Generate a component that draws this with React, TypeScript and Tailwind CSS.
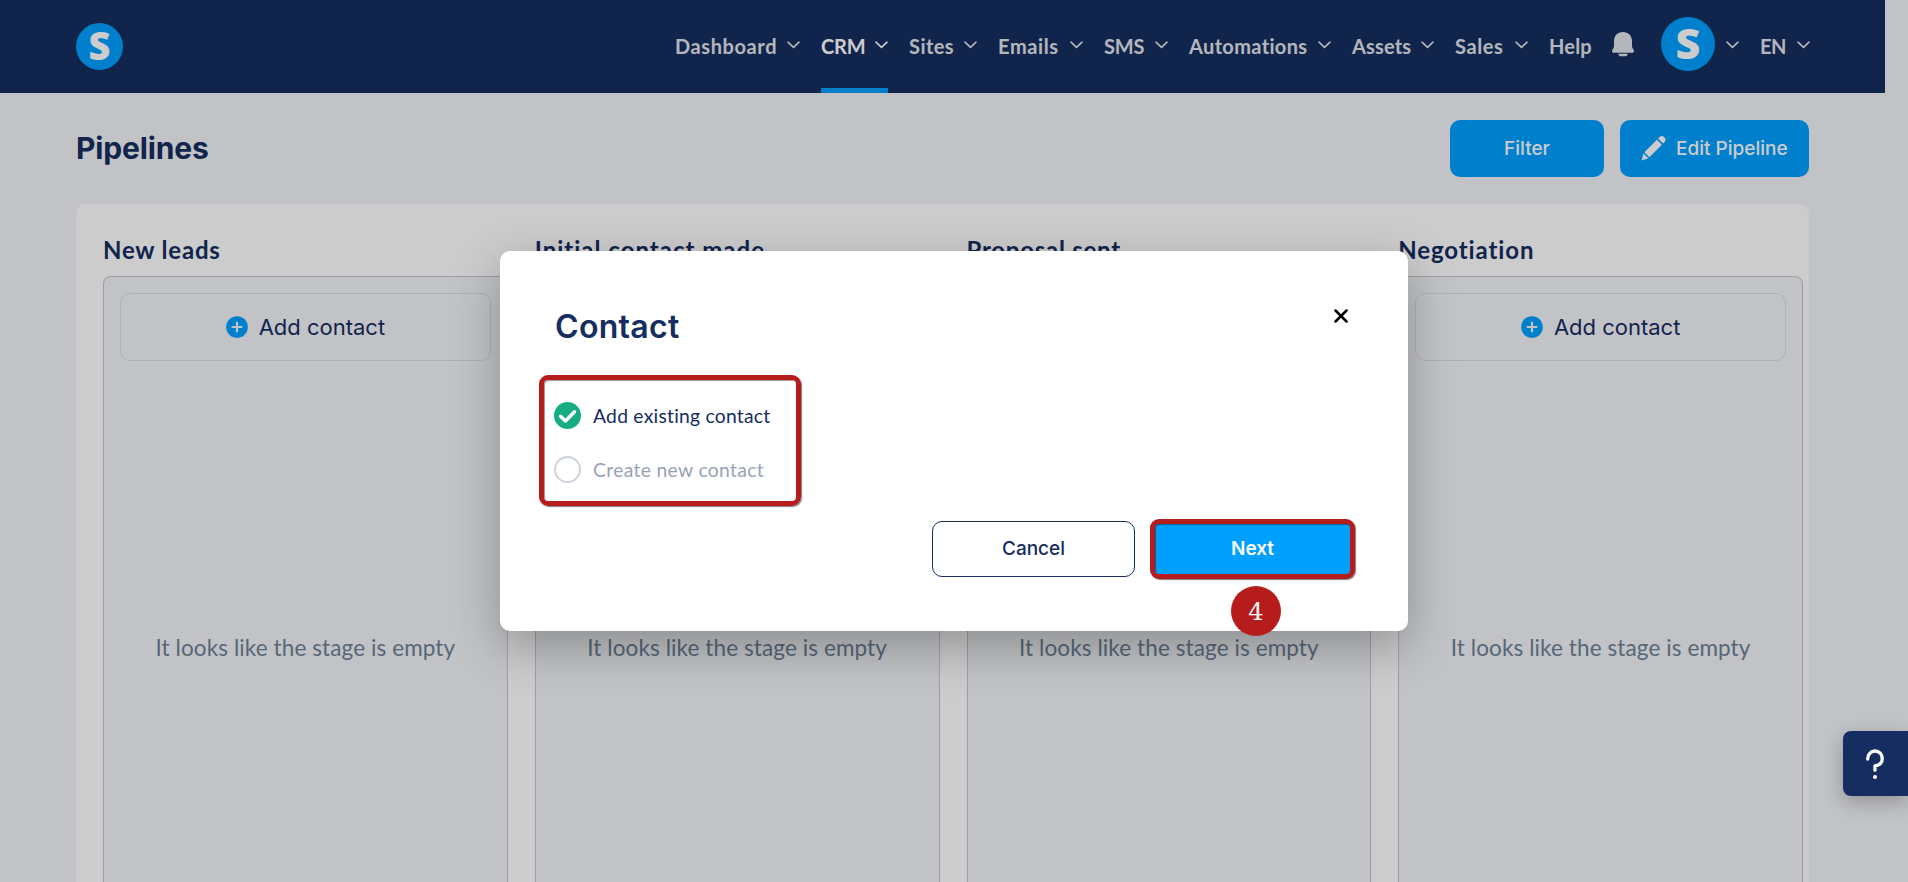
import React, { useState } from 'react';

const navItems = [
  { label: 'Dashboard', width: 'w-[101px]', tracking: 'tracking-[0.6px]' },
  { label: 'CRM', width: 'w-[43px]', tracking: 'tracking-[-0.2px]', active: true },
  { label: 'Sites', width: 'w-[44px]', tracking: 'tracking-[0.45px]' },
  { label: 'Emails', width: 'w-[61px]', tracking: 'tracking-[0.6px]' },
  { label: 'SMS', width: 'w-[40px]', tracking: 'tracking-[-0.2px]' },
  { label: 'Automations', width: 'w-[118px]', tracking: 'tracking-[0.35px]' },
  { label: 'Assets', width: 'w-[58px]', tracking: 'tracking-[0.15px]' },
  { label: 'Sales', width: 'w-[49px]', tracking: 'tracking-[0.6px]' },
];

const stages = [
  { name: 'New leads', tracking: 'tracking-[0.8px]' },
  { name: 'Initial contact made', tracking: 'tracking-[1px]' },
  { name: 'Proposal sent', tracking: 'tracking-[0.75px]' },
  { name: 'Negotiation', tracking: 'tracking-[0.9px]' },
];

const Chevron: React.FC = () => (
  <svg width="13" height="8" viewBox="0 0 13 8" fill="none" className="shrink-0 -mt-0.5">
    <path d="M1 1.2 6.5 6.4 12 1.2" stroke="currentColor" strokeWidth="1.6" strokeLinecap="round" strokeLinejoin="round" />
  </svg>
);

const Header: React.FC = () => (
  <header className="w-[1885px] h-[93px] bg-[#152d60] flex items-center pl-[76px] text-[#e0e5eb] font-['Lato',sans-serif] font-bold text-[20px]">
    <div className="w-[47px] h-[47px] rounded-full bg-[#00a0ff] flex items-center justify-center text-white">
      <span className="font-['Open_Sans',sans-serif] font-extrabold text-[38px] leading-none -mt-[3px]">S</span>
    </div>
    <nav className="ml-[552px] h-full flex items-center gap-[21px]">
      {navItems.map(item => (
        <div
          key={item.label}
          className={`relative h-full pb-[2px] flex items-center gap-[11px] ${item.active ? 'text-white' : ''}`}
        >
          <span className={`whitespace-nowrap ${item.width} ${item.tracking}`}>{item.label}</span>
          <Chevron />
          {item.active && <span className="absolute inset-x-0 bottom-0 h-[5px] bg-[#00a0ff]" />}
        </div>
      ))}
      <span className="w-[42px] pb-[2px] tracking-[0.2px]">Help</span>
    </nav>
    <svg width="22" height="25" viewBox="0 0 22 25" fill="currentColor" className="ml-[21px] -mt-[5px]">
      <path d="M11 0C5.6 0 2 3.8 2 9v4.5c0 1.6-.5 2.800-1.400 4C.2 18.100 0 18.700 0 19.300 0 20.200.6 20.700 1.500 20.700h19c.9 0 1.500-.5 1.500-1.400 0-.6-.2-1.200-.6-1.800-.9-1.200-1.400-2.400-1.400-4V9c0-5.200-3.600-9-9-9Z" />
      <path d="M6.300 21.700h9.400c0 1.500-1.100 2.600-2.700 2.600H9c-1.600 0-2.700-1.100-2.700-2.600Z" />
    </svg>
    <div className="ml-[27px] -mt-[5px] w-[54px] h-[54px] rounded-full bg-[#00a0ff] flex items-center justify-center text-white">
      <span className="font-['Open_Sans',sans-serif] font-extrabold text-[43px] leading-none -mt-[3px]">S</span>
    </div>
    <div className="ml-[11px] pb-[2px] flex items-center">
      <Chevron />
      <span className="ml-[21px] w-[26px] tracking-[-0.4px]">EN</span>
      <span className="ml-[11px]"><Chevron /></span>
    </div>
  </header>
);

const StageColumn: React.FC<{ name: string; tracking: string }> = ({ name, tracking }) => (
  <div className="flex-1 flex flex-col">
    <h2 className={`h-[45px] font-['Lato',sans-serif] font-bold text-[24px] leading-[38px] ${tracking}`}>{name}</h2>
    <div className="flex-1 rounded-t-lg border border-b-0 border-[#c5c9cf] bg-[#f2f4f8] p-4">
      <button className="w-full h-[68px] rounded-[10px] border border-[#dcdee2] flex items-center justify-center gap-[11px] text-[22px]">
        <svg width="22" height="22" viewBox="0 0 22 22">
          <circle cx="11" cy="11" r="10.800" fill="#00a0ff" />
          <path d="M11 6.500v9M6.500 11h9" stroke="#f2f4f8" strokeWidth="2.200" strokeLinecap="round" />
        </svg>
        Add contact
      </button>
      <p className="mt-[271px] text-center font-['Lato',sans-serif] text-[22.5px] leading-[32px] tracking-[0.1px] text-[#6d8196]">
        It looks like the stage is empty
      </p>
    </div>
  </div>
);

const ContactModal: React.FC = () => {
  const [choice, setChoice] = useState('existing');

  const options = [
    { id: 'existing', label: 'Add existing contact', tracking: 'tracking-[0.25px]' },
    { id: 'new', label: 'Create new contact', tracking: 'tracking-[0.35px]' },
  ];

  return (
    <div className="relative mt-[251px] w-[908px] h-[380px] rounded-[10px] bg-white shadow-[0_16px_48px_rgba(0,0,0,0.28)]">
      <div className="flex items-start justify-between pt-[54px] pl-[55px] pr-[60px]">
        <h3 className="text-[32px] leading-[44px] font-semibold tracking-[0.3px]">Contact</h3>
        <button aria-label="Close" className="mt-1">
          <svg width="14" height="14" viewBox="0 0 14 14" stroke="#000" strokeWidth="2.500" strokeLinecap="round">
            <path d="M1.500 1.500l11 11M12.500 1.500l-11 11" />
          </svg>
        </button>
      </div>

      {/* Contact source */}
      <div className="ml-[39px] mt-[26px] w-[262px] h-[131px] rounded-[9px] border-5 border-[#b71c1c] shadow-[1px_1px_1px_rgba(0,0,0,0.5),inset_1px_1px_1px_rgba(0,0,0,0.4)] pl-[10px] pt-[22px] flex flex-col gap-[27px]">
        {options.map(option => (
          <button
            key={option.id}
            onClick={() => setChoice(option.id)}
            className="h-[27px] flex items-center gap-3 font-['Lato',sans-serif] text-[19.3px]"
          >
            {choice === option.id ? (
              <svg width="27" height="27" viewBox="0 0 27 27" fill="none">
                <circle cx="13.500" cy="13.500" r="13.500" fill="#17ad82" />
                <path d="M6.500 14.300l5 4.700 9-9.200" stroke="#fff" strokeWidth="3.400" strokeLinecap="round" strokeLinejoin="round" />
              </svg>
            ) : (
              <span className="w-[27px] h-[27px] rounded-full border-2 border-[#cdd3dd]" />
            )}
            <span className={`whitespace-nowrap pt-0.5 ${option.tracking} ${choice === option.id ? '' : 'text-[#98a1b7]'}`}>
              {option.label}
            </span>
          </button>
        ))}
      </div>

      <div className="mt-[13px] pr-[53px] flex items-center justify-end gap-[15px] text-[19px]">
        <button className="w-[203px] h-[56px] rounded-[10px] border border-[#152d60] font-medium">Cancel</button>
        <button className="w-[205px] h-[60px] rounded-[9px] border-5 border-[#b71c1c] bg-[#00a0ff] text-white font-semibold shadow-[1px_1px_1px_rgba(0,0,0,0.5),inset_1px_1px_1px_rgba(0,0,0,0.4)]">
          Next
        </button>
      </div>

      <span className="absolute left-[731px] top-[335px] w-[50px] h-[50px] pt-0.5 rounded-full bg-[#b71c1c] text-white flex items-center justify-center font-['DejaVu_Serif',serif] text-[24px]">
        4
      </span>
    </div>
  );
};

const App: React.FC = () => {
  return (
    <div className="relative w-full h-[882px] overflow-hidden bg-[#f3f4f9] text-[#152d60] font-['Inter',sans-serif] flex flex-col">
      <Header />

      <main className="flex-1 w-[1885px] px-[76px] flex flex-col">
        <div className="h-[111px] flex items-center justify-between">
          <h1 className="text-[30px] font-bold tracking-[-0.15px]">Pipelines</h1>
          <div className="flex gap-4 text-[19px] font-medium text-white">
            <button className="w-[154px] h-[57px] pt-0.5 rounded-[10px] bg-[#00a0ff]">Filter</button>
            <button className="w-[189px] h-[57px] rounded-[10px] bg-[#00a0ff] flex items-center pl-[21px] gap-[10px]">
              <svg width="25" height="25" viewBox="0 0 25 25" fill="currentColor">
                <path d="M18.300 1.200a3.500 3.500 0 0 1 5 5l-1.300 1.400-5-5 1.300-1.400Z" />
                <path d="M15.900 3.700l5 5L8.400 21.200l-5-5L15.900 3.700Z" />
                <path d="M2.500 17.400l4.900 4.900L.5 24.500l2-7.100Z" />
              </svg>
              <span className="pt-0.5">Edit Pipeline</span>
            </button>
          </div>
        </div>

        {/* Pipeline board */}
        <div className="flex-1 rounded-t-[10px] bg-white pl-[27px] pr-[6px] pt-[27px] flex gap-[27px]">
          {stages.map(stage => (
            <StageColumn key={stage.name} name={stage.name} tracking={stage.tracking} />
          ))}
        </div>
      </main>

      <div className="absolute inset-0 bg-black/20 flex items-start justify-center">
        <ContactModal />
      </div>

      <button
        aria-label="Help"
        className="absolute right-0 top-[731px] w-[65px] h-[65px] rounded-l-lg bg-[#152d60] shadow-[0_6px_20px_rgba(0,0,0,0.25)] flex items-center justify-center"
      >
        <svg width="20" height="32" viewBox="0 0 20 32" fill="none" className="-ml-px">
          <path d="M2.700 11c0-4.500 3-8 7.300-8s7.200 3.300 7.200 7.400c0 4.200-3 6.900-7.200 7.500v4.300" stroke="#fff" strokeWidth="3.300" strokeLinecap="round" strokeLinejoin="round" />
          <circle cx="10" cy="28.900" r="2" fill="#fff" />
        </svg>
      </button>
    </div>
  );
};

export default App;
